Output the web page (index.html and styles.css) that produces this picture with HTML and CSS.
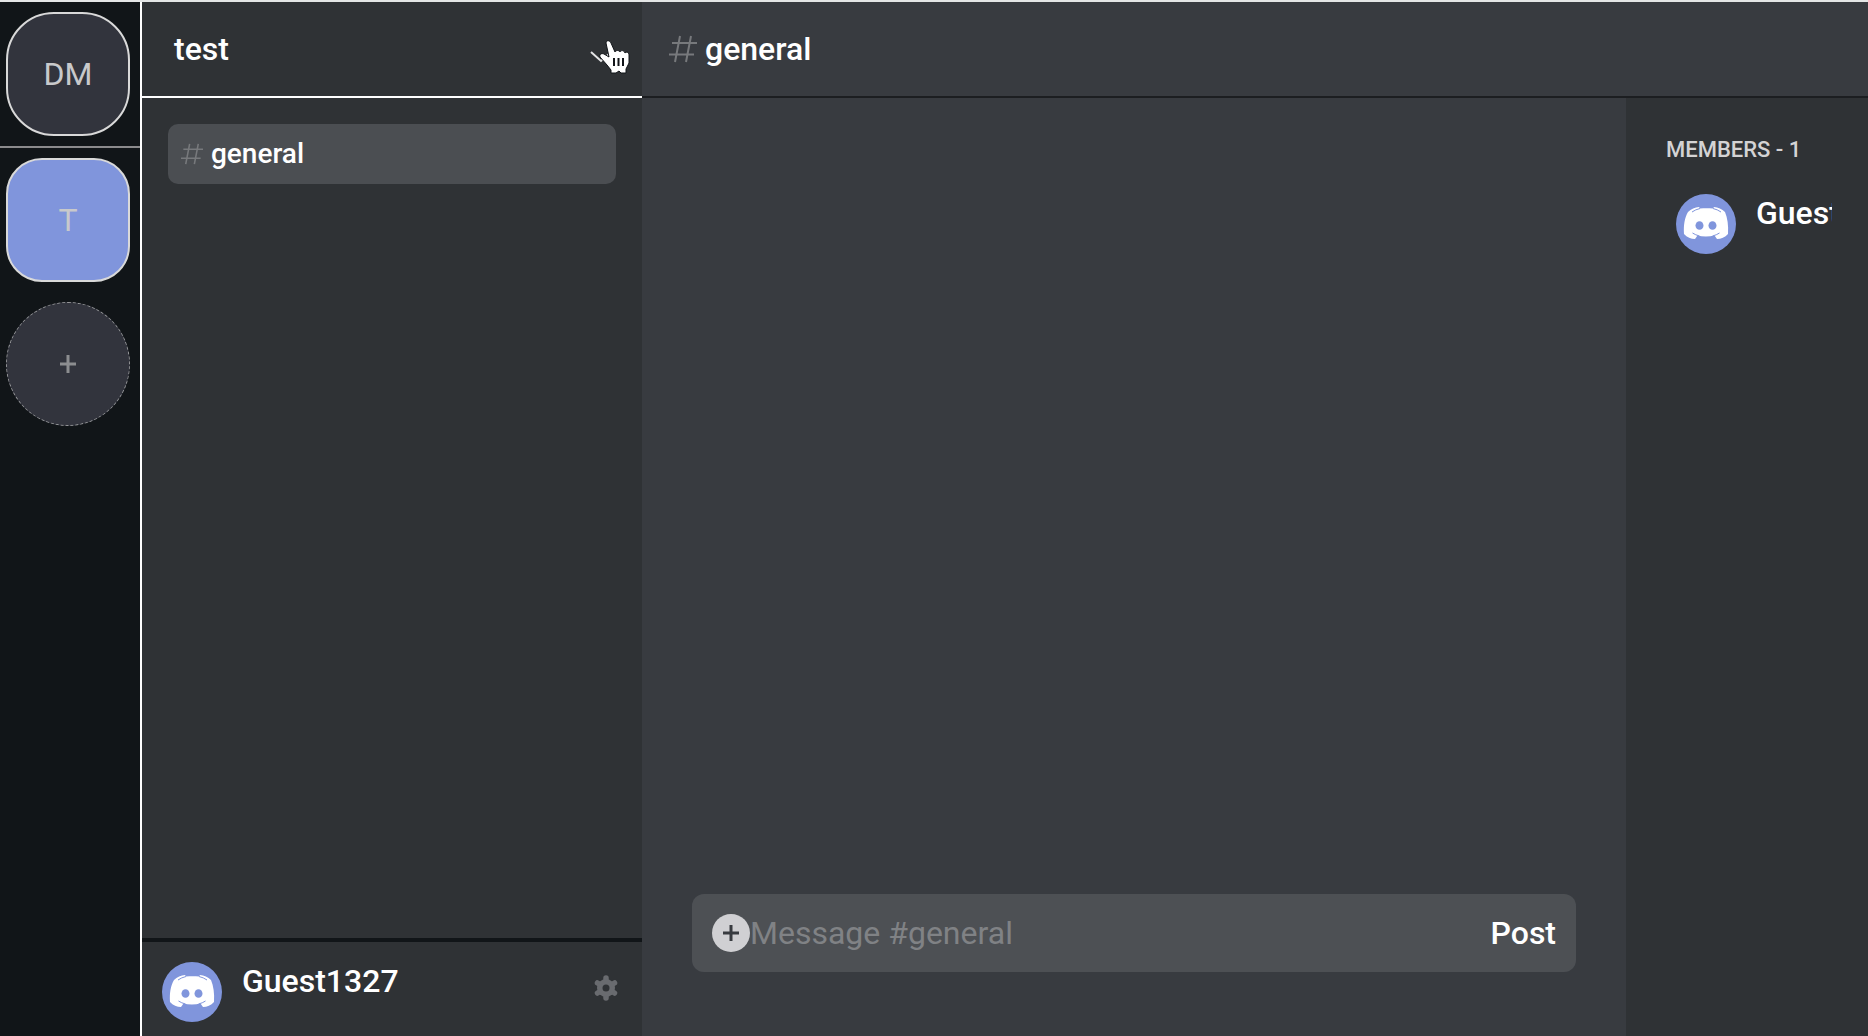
FILE: index.html
```html
<!DOCTYPE html>
<html lang="en">
<head>
<meta charset="utf-8">
<meta name="viewport" content="width=device-width, initial-scale=1">
<title>general</title>
<link rel="stylesheet" href="styles.css">
</head>
<body>
<svg class="sprite" aria-hidden="true">
  <symbol id="mascot" viewBox="0 0 60 60">
    <circle cx="30" cy="30" r="30" fill="#8095dc"/>
    <path fill="#fff" d="M12 18C15 15 19 13.200 23 13l1 1.500c4-.5 9-.5 13 0L38 13c4 .2 8 2 11 5 2.500 6 3.500 13 3 22-3 3.500-7 5-11 5l-2.500-3.500c-5.500 1.200-12 1.200-17 0L19 45c-4 0-8-1.500-11-5-.5-9 .5-16 4-22z"/>
    <path fill="none" stroke="#8095dc" d="M16 18q3.500-2.500 8-3.500M45 18q-3.500-2.500-8-3.500" />
    <path fill="none" stroke="#8095dc" d="M16.500 39q3 2 7 3M43.500 39q-3 2-7 3"/>
    <ellipse cx="23.500" cy="31.500" rx="4" ry="4.300" fill="#8095dc"/>
    <ellipse cx="36.500" cy="31.500" rx="4" ry="4.300" fill="#8095dc"/>
  </symbol>
  <symbol id="hash" viewBox="0 0 28 28">
    <path fill="none" stroke="currentColor" stroke-width="2" d="M11 1 6 27M22 1l-5 26M3 8h25M0 19.500h25"/>
  </symbol>
</svg>
<div class="app">
  <nav class="rail" aria-label="Servers">
    <button class="server">DM</button>
    <hr class="rail-line">
    <button class="server server-active">T</button>
    <button class="server server-add" aria-label="Add server">
      <svg width="16" height="18" viewBox="0 0 16 18" aria-hidden="true"><path d="M8 0v18M0 9h16" stroke="#8c8d90" stroke-width="3"/></svg>
    </button>
  </nav>
  <aside class="sidebar">
    <header class="sidebar-head">
      <h1 class="server-name">test</h1>
      <button class="menu" aria-label="Server menu">
        <svg class="chevron" width="22" height="12" viewBox="0 0 22 12" aria-hidden="true"><path d="m1 1 10 9L19 3" fill="none" stroke="#e4e5e6" stroke-width="2"/></svg>
        <svg class="pointer" width="32" height="36" viewBox="0 0 32 36" aria-hidden="true">
          <path d="M7 3c0-3 4-3 5 0l4 9c1-2 4-2 5 0 1-2 4-2 5 1 2-2 4 0 4 2v8l-3 6v4h-5l-2-2-3 2h-5v-3l-4-5-7-8c-1-3 2-4 4-3l5 3z" fill="#fff" stroke="#111418"/>
          <path d="M15 18v8M19.500 18v8M24 18v8" stroke="#111418" stroke-width="2"/>
        </svg>
      </button>
    </header>
    <nav class="channels" aria-label="Channels">
      <a class="channel" href="#general"><svg class="hash-small" aria-hidden="true"><use href="#hash"/></svg>general</a>
    </nav>
    <footer class="account">
      <svg class="avatar" aria-hidden="true"><use href="#mascot"/></svg>
      <span class="user-name">Guest1327</span>
      <button class="settings" aria-label="Settings">
        <svg width="24" height="26" viewBox="0 0 24 26" aria-hidden="true">
          <g stroke="#696b6f" stroke-width="5.500" stroke-linecap="round"><path d="M12 3v20M3.500 8l17 10M20.500 8l-17 10"/></g>
          <circle cx="12" cy="13" r="9" fill="#696b6f"/><circle cx="12" cy="13" r="3.500" fill="#2f3235"/>
        </svg>
      </button>
    </footer>
  </aside>
  <main class="main">
    <header class="main-head">
      <svg class="hash-large" aria-hidden="true"><use href="#hash"/></svg>
      <h2 class="channel-title">general</h2>
    </header>
    <div class="content">
      <section class="chat">
        <form class="composer">
          <button class="attach" type="button" aria-label="Attach file">
            <svg width="16" height="18" viewBox="0 0 16 18" aria-hidden="true"><path d="M8 1v16M0 9h16" stroke="#383b40" stroke-width="3"/></svg>
          </button>
          <input class="message" type="text" placeholder="Message #general" aria-label="Message #general">
          <button class="post" type="submit">Post</button>
        </form>
      </section>
      <aside class="members">
        <h3 class="members-title">MEMBERS - 1</h3>
        <div class="member">
          <svg class="avatar" aria-hidden="true"><use href="#mascot"/></svg>
          <span class="user-name">Guest1327</span>
        </div>
      </aside>
    </div>
  </main>
</div>
</body>
</html>
```

FILE: styles.css
```css
* {
  box-sizing: border-box;
}

body {
  margin: 0;
  font-family: Roboto, "Liberation Sans", sans-serif;
  font-size: 32px;
  line-height: 40px;
  color: #fff;
  background: #383b40;
}

button,
input {
  padding: 0;
  border: 0;
  background: none;
  color: inherit;
  font: inherit;
}

svg {
  display: block;
  flex: none;
}

h1,
h2,
h3 {
  margin: 0;
  font-size: 32px;
  font-weight: 500;
}

.sprite {
  position: absolute;
  width: 0;
  height: 0;
}

.app {
  display: flex;
  height: 100vh;
  border-top: 2px solid #e4e6e6;
}

.rail {
  flex: none;
  display: flex;
  flex-direction: column;
  width: 142px;
  padding-top: 10px;
  border-right: 2px solid #fff;
  background: #111518;
}

.server {
  flex: none;
  display: flex;
  align-items: center;
  justify-content: center;
  width: 124px;
  height: 124px;
  margin-left: 6px;
  border: 2px solid #d9d9d9;
  border-radius: 48px;
  background: #32343d;
  color: #c8c9cb;
}

.rail-line {
  width: 100%;
  height: 2px;
  margin: 10px 0;
  border: 0;
  background: #8b8a8c;
}

.server-active {
  border-radius: 36px;
  background: #8095dc;
}

.server-add {
  margin-top: 20px;
  border: 1px dashed #96979a;
  border-radius: 50%;
}

.sidebar {
  flex: none;
  display: flex;
  flex-direction: column;
  width: 500px;
  background: #2f3235;
}

.sidebar-head {
  display: flex;
  align-items: center;
  justify-content: space-between;
  height: 96px;
  padding: 0 30px 0 32px;
  border-bottom: 2px solid #fff;
}

.menu {
  position: relative;
  padding-top: 16px;
}

.pointer {
  position: absolute;
  left: 9px;
  top: 5px;
}

.channels {
  flex: 1;
  padding: 26px;
}

.channel {
  display: flex;
  align-items: center;
  gap: 8px;
  height: 60px;
  padding-left: 13px;
  border-radius: 10px;
  background: #4b4e52;
  color: #fff;
  font-size: 28px;
  font-weight: 500;
  text-decoration: none;
}

.hash-small {
  width: 22px;
  height: 22px;
  color: #77797c;
}

.account {
  display: flex;
  align-items: flex-start;
  height: 98px;
  padding: 20px 24px 0 20px;
  border-top: 4px solid #111518;
}

.avatar {
  width: 60px;
  height: 60px;
}

.user-name {
  margin-left: 20px;
  font-weight: 500;
  line-height: 38px;
}

.settings {
  margin: 13px 0 0 auto;
}

.main {
  flex: 1;
  display: flex;
  flex-direction: column;
  min-width: 0;
}

.main-head {
  display: flex;
  align-items: center;
  gap: 8px;
  height: 96px;
  padding-left: 27px;
  border-bottom: 2px solid #1c1e21;
}

.hash-large {
  width: 28px;
  height: 28px;
  color: #77797c;
}

.content {
  flex: 1;
  display: flex;
}

.chat {
  flex: 1;
  display: flex;
  flex-direction: column;
  justify-content: flex-end;
  min-width: 0;
  padding: 0 50px 64px;
}

.composer {
  display: flex;
  align-items: center;
  height: 78px;
  padding: 0 20px;
  border-radius: 12px;
  background: #4d5054;
}

.attach {
  flex: none;
  display: flex;
  align-items: center;
  justify-content: center;
  width: 38px;
  height: 38px;
  border-radius: 50%;
  background: #d0d0d3;
}

.message {
  flex: 1;
  min-width: 0;
  outline: 0;
}

.message::placeholder {
  color: #808285;
}

.post {
  font-weight: 500;
}

.members {
  flex: none;
  width: 242px;
  padding: 32px 36px 0 40px;
  background: #2f3235;
}

.members-title {
  color: #d4d3d4;
  font-size: 22px;
  font-weight: 500;
}

.member {
  display: flex;
  align-items: flex-start;
  margin-top: 24px;
  padding-left: 10px;
  overflow: hidden;
}
```
